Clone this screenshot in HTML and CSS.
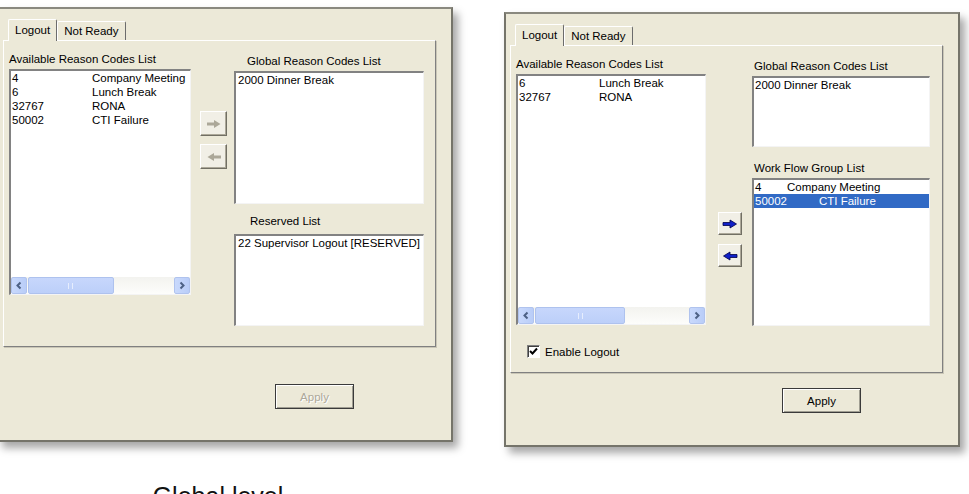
FILE: index.html
```html
<!DOCTYPE html>
<html lang="en">
<head>
  <meta charset="UTF-8">
  <title>Reason Codes</title>
  <link rel="stylesheet" href="styles.css">
</head>
<body>
  <div class="stage">

    <!-- global level -->
    <figure class="shot shot-global">
      <div class="dialog">
        <div class="tabs">
          <span class="tab active">Logout</span>
          <span class="tab">Not Ready</span>
        </div>
        <div class="panel">
          <div class="panel-top">
            <div class="col col-avail">
              <div class="label">Available Reason Codes List</div>
              <div class="listbox list-avail">
                <div class="rows">
                  <div class="row"><span class="code">4</span>Company Meeting</div>
                  <div class="row"><span class="code">6</span>Lunch Break</div>
                  <div class="row"><span class="code">32767</span>RONA</div>
                  <div class="row"><span class="code">50002</span>CTI Failure</div>
                </div>
                <div class="hscroll">
                  <span class="sb-btn"><svg width="8" height="9" viewBox="0 0 8 9"><path d="M5.5 1.5 2.5 4.5l3 3" fill="none" stroke="#4d6185" stroke-width="2"/></svg></span>
                  <span class="sb-track"><span class="sb-thumb"><i></i></span></span>
                  <span class="sb-btn"><svg width="8" height="9" viewBox="0 0 8 9"><path d="M2.5 1.5l3 3-3 3" fill="none" stroke="#4d6185" stroke-width="2"/></svg></span>
                </div>
              </div>
            </div>
            <div class="movers">
              <button class="move" disabled><svg width="16" height="10" viewBox="0 0 16 10"><path d="M1 3.5h7V1l6.5 4L8 9V6.5H1z" fill="#aca899"/></svg></button>
              <button class="move" disabled><svg width="16" height="10" viewBox="0 0 16 10"><path d="M15 3.5H8V1L1.5 5 8 9V6.5h7z" fill="#aca899"/></svg></button>
            </div>
            <div class="col col-right">
              <div class="label inset-global">Global Reason Codes List</div>
              <div class="listbox list-global">
                <div class="rows">
                  <div class="row">2000 Dinner Break</div>
                </div>
              </div>
              <div class="label inset-reserved">Reserved List</div>
              <div class="listbox list-reserved">
                <div class="rows">
                  <div class="row">22 Supervisor Logout [RESERVED]</div>
                </div>
              </div>
            </div>
          </div>
        </div>
        <div class="footer">
          <button class="apply" disabled>Apply</button>
        </div>
      </div>
      <figcaption>Global level</figcaption>
    </figure>

    <!-- agent level -->
    <figure class="shot shot-agent">
      <div class="dialog">
        <div class="tabs">
          <span class="tab active">Logout</span>
          <span class="tab">Not Ready</span>
        </div>
        <div class="panel">
          <div class="panel-top">
            <div class="col col-avail">
              <div class="label">Available Reason Codes List</div>
              <div class="listbox list-avail">
                <div class="rows">
                  <div class="row"><span class="code">6</span>Lunch Break</div>
                  <div class="row"><span class="code">32767</span>RONA</div>
                </div>
                <div class="hscroll">
                  <span class="sb-btn"><svg width="8" height="9" viewBox="0 0 8 9"><path d="M5.5 1.5 2.5 4.5l3 3" fill="none" stroke="#4d6185" stroke-width="2"/></svg></span>
                  <span class="sb-track"><span class="sb-thumb"><i></i></span></span>
                  <span class="sb-btn"><svg width="8" height="9" viewBox="0 0 8 9"><path d="M2.5 1.5l3 3-3 3" fill="none" stroke="#4d6185" stroke-width="2"/></svg></span>
                </div>
              </div>
            </div>
            <div class="movers">
              <button class="move"><svg width="16" height="10" viewBox="0 0 16 10"><path d="M1 3.5h7V1l6.5 4L8 9V6.5H1z" fill="#1020c8" stroke="#000048" stroke-width=".8"/></svg></button>
              <button class="move"><svg width="16" height="10" viewBox="0 0 16 10"><path d="M15 3.5H8V1L1.5 5 8 9V6.5h7z" fill="#1020c8" stroke="#000048" stroke-width=".8"/></svg></button>
            </div>
            <div class="col col-right">
              <div class="label">Global Reason Codes List</div>
              <div class="listbox list-global">
                <div class="rows">
                  <div class="row">2000 Dinner Break</div>
                </div>
              </div>
              <div class="label label-flow">Work Flow Group List</div>
              <div class="listbox list-flow">
                <div class="rows">
                  <div class="row">4        Company Meeting</div>
                  <div class="row selected">50002          CTI Failure</div>
                </div>
              </div>
            </div>
          </div>
          <div class="option">
            <span class="checkbox"><svg width="9" height="9" viewBox="0 0 9 9"><path d="M1 4l2.5 2.5L8 1.5" fill="none" stroke="#000" stroke-width="2"/></svg></span>
            <span>Enable Logout</span>
          </div>
        </div>
        <div class="footer">
          <button class="apply">Apply</button>
        </div>
      </div>
      <figcaption>Agent level</figcaption>
    </figure>

  </div>
</body>
</html>
```

FILE: styles.css
```css
* {
  margin: 0;
  padding: 0;
  box-sizing: border-box;
}

html, body {
  height: 100%;
  overflow: hidden;
}

body {
  background-color: #fff;
  color: #000;
  font-family: "Liberation Sans", Arial, sans-serif;
  font-size: 11.5px;
}

button {
  font: inherit;
  color: inherit;
}

.stage {
  display: flex;
  align-items: flex-start;
}

.shot {
  flex: none;
  width: 456px;
}

.shot-global {
  margin: 7px 0 0 -3px;
}

.shot-agent {
  margin: 12px 0 0 51px;
}

/* window */
.dialog {
  height: 435px;
  background-color: #ece9d8;
  border: 2px solid #75746a;
  border-top-color: #8a897f;
  box-shadow: 5px 6px 8px rgba(0, 0, 0, 0.35);
}

.tabs {
  display: flex;
  align-items: flex-end;
  height: 31px;
  padding-left: 9px;
}

.tab {
  display: flex;
  align-items: center;
  height: 19px;
  padding: 0 6px 1px;
  background-color: #ece9d8;
  border: 1px solid #fff;
  border-right-color: #6c6c6c;
  border-bottom: none;
  border-radius: 2px 2px 0 0;
}

.tab.active {
  position: relative;
  z-index: 1;
  height: 22px;
  margin-bottom: -1px;
  padding-bottom: 2px;
}

.panel {
  height: 307px;
  margin: 0 15px 0 4px;
  padding: 12px 0 0 5px;
  border: 1px solid #fff;
  border-right-color: #808080;
  border-bottom-color: #808080;
  box-shadow: 1px 1px 0 #c9c6b6;
}

.shot-agent .panel {
  height: 328px;
}

.panel-top {
  display: flex;
  align-items: flex-start;
}

.label {
  line-height: 13px;
  margin-bottom: 3px;
  white-space: nowrap;
}

.col-right {
  margin-top: 2px;
}

.inset-global {
  padding-left: 13px;
}

.inset-reserved {
  margin-top: 11px;
  margin-bottom: 6px;
  padding-left: 16px;
}

.label-flow {
  margin-top: 15px;
  padding-left: 2px;
}

.shot-agent .col-right .label:first-child {
  padding-left: 2px;
}

/* list boxes */
.listbox {
  display: flex;
  flex-direction: column;
  overflow: hidden;
  background-color: #fff;
  border-style: solid;
  border-width: 2px 1px 1px 2px;
  border-color: #828282 #f4f4f4 #f4f4f4 #828282;
}

.rows {
  flex: 1;
}

.row {
  line-height: 14px;
  padding-left: 1px;
  white-space: pre;
}

.row.selected {
  background-color: #316ac5;
  color: #fff;
}

.code {
  display: inline-block;
  width: 80px;
}

.shot-global .list-avail { width: 182px; height: 226px; }
.shot-global .list-global { width: 190px; height: 133px; }
.shot-global .list-reserved { width: 190px; height: 92px; }
.shot-global .list-global .row,
.shot-global .list-reserved .row { padding-left: 2px; }

.shot-agent .list-avail { width: 190px; height: 251px; }
.shot-agent .list-global { width: 178px; height: 71px; }
.shot-agent .list-flow { width: 178px; height: 148px; }

/* horizontal scroll bar */
.hscroll {
  display: flex;
  height: 17px;
  background: linear-gradient(#f3f3ef, #fdfdfb);
}

.sb-btn {
  display: flex;
  align-items: center;
  justify-content: center;
  width: 16px;
  background: linear-gradient(90deg, #c9d9fc, #b9cdf8);
  border: 1px solid #b0c3ee;
  border-radius: 2px;
}

.sb-track {
  flex: 1;
  display: flex;
  padding: 0 1px;
}

.sb-thumb {
  display: flex;
  align-items: center;
  justify-content: center;
  width: 59%;
  background: linear-gradient(#c7d7fc, #bccff9);
  border: 1px solid #aec2ee;
  border-radius: 2px;
}

.sb-thumb i {
  width: 5px;
  height: 6px;
  border-left: 1px solid #e6edfd;
  border-right: 1px solid #e6edfd;
}

/* move buttons */
.movers {
  display: flex;
  flex-direction: column;
}

.shot-global .movers { margin-left: 9px; padding-top: 58px; gap: 8px; }
.shot-global .move { width: 27px; height: 25px; }
.shot-global .col-right { margin-left: 7px; }

.shot-agent .movers { margin-left: 12px; padding-top: 154px; gap: 9px; }
.shot-agent .move { width: 24px; height: 23px; }
.shot-agent .col-right { margin-left: 10px; }

.move {
  display: flex;
  align-items: center;
  justify-content: center;
  background-color: #f1efe6;
  border: 1px solid #fff;
  border-right-color: #716f64;
  border-bottom-color: #716f64;
  box-shadow: inset -1px -1px 0 #aca899;
}

/* checkbox */
.option {
  display: flex;
  align-items: center;
  gap: 5px;
  margin-top: 19px;
  padding-left: 11px;
}

.checkbox {
  display: flex;
  align-items: center;
  justify-content: center;
  width: 13px;
  height: 13px;
  background-color: #fff;
  border: 1px solid #fff;
  border-top-color: #808080;
  border-left-color: #808080;
  box-shadow: inset 1px 1px 0 #404040;
}

/* footer */
.footer {
  padding: 37px 0 0 276px;
}

.shot-agent .footer {
  padding-top: 15px;
}

.apply {
  width: 79px;
  height: 25px;
  background-color: #ece9d8;
  border: 1px solid #3a3a3a;
  box-shadow: inset 1px 1px 0 #fff, inset -1px -1px 0 #a09e92;
}

.apply:disabled {
  color: #aca899;
  text-shadow: 1px 1px 0 #fff;
}

figcaption {
  font-size: 25px;
  line-height: 30px;
  color: #111;
  text-align: center;
}

.shot-global figcaption {
  margin-top: 39px;
  padding-right: 14px;
}

.shot-agent figcaption {
  margin-top: 43px;
  padding-left: 40px;
}
```
